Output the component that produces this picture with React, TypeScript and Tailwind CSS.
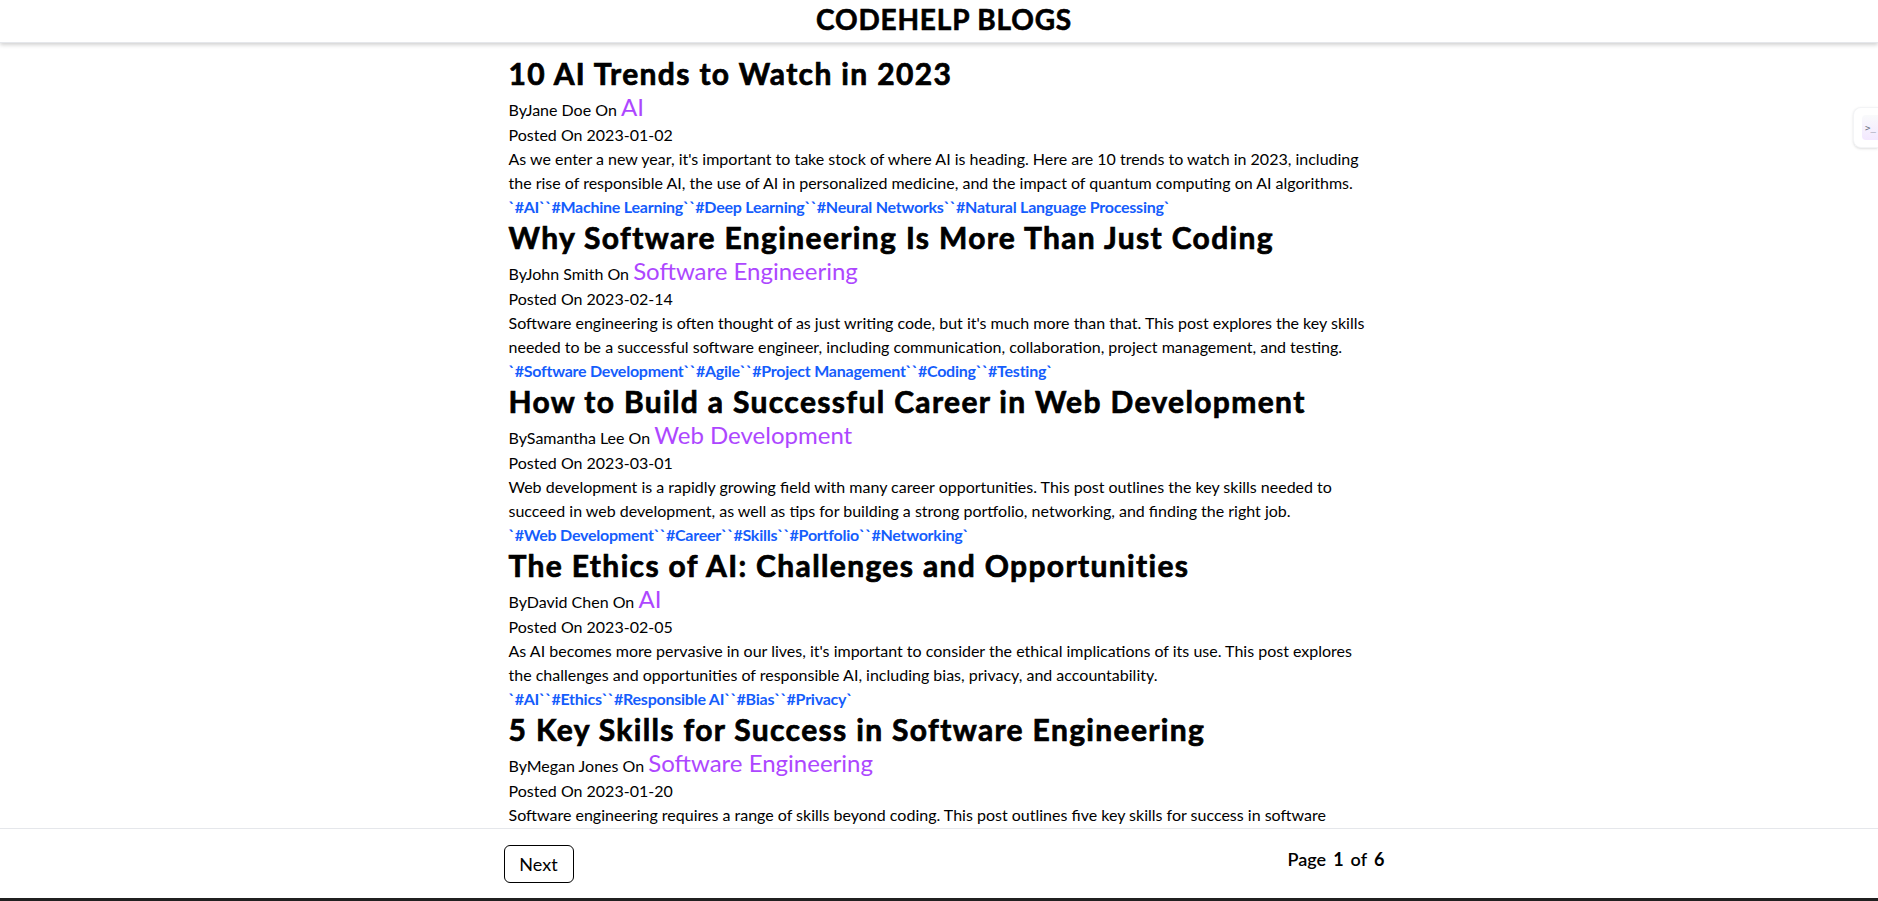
import { useState } from "react";

interface Post {
  title: string;
  author: string;
  category: string;
  date: string;
  lines: string[];
  tags: string[];
}

const posts: Post[] = [
  {
    title: "10 AI Trends to Watch in 2023",
    author: "Jane Doe",
    category: "AI",
    date: "2023-01-02",
    lines: [
      "As we enter a new year, it's important to take stock of where AI is heading. Here are 10 trends to watch in 2023, including",
      "the rise of responsible AI, the use of AI in personalized medicine, and the impact of quantum computing on AI algorithms.",
    ],
    tags: ["AI", "Machine Learning", "Deep Learning", "Neural Networks", "Natural Language Processing"],
  },
  {
    title: "Why Software Engineering Is More Than Just Coding",
    author: "John Smith",
    category: "Software Engineering",
    date: "2023-02-14",
    lines: [
      "Software engineering is often thought of as just writing code, but it's much more than that. This post explores the key skills",
      "needed to be a successful software engineer, including communication, collaboration, project management, and testing.",
    ],
    tags: ["Software Development", "Agile", "Project Management", "Coding", "Testing"],
  },
  {
    title: "How to Build a Successful Career in Web Development",
    author: "Samantha Lee",
    category: "Web Development",
    date: "2023-03-01",
    lines: [
      "Web development is a rapidly growing field with many career opportunities. This post outlines the key skills needed to",
      "succeed in web development, as well as tips for building a strong portfolio, networking, and finding the right job.",
    ],
    tags: ["Web Development", "Career", "Skills", "Portfolio", "Networking"],
  },
  {
    title: "The Ethics of AI: Challenges and Opportunities",
    author: "David Chen",
    category: "AI",
    date: "2023-02-05",
    lines: [
      "As AI becomes more pervasive in our lives, it's important to consider the ethical implications of its use. This post explores",
      "the challenges and opportunities of responsible AI, including bias, privacy, and accountability.",
    ],
    tags: ["AI", "Ethics", "Responsible AI", "Bias", "Privacy"],
  },
  {
    title: "5 Key Skills for Success in Software Engineering",
    author: "Megan Jones",
    category: "Software Engineering",
    date: "2023-01-20",
    lines: [
      "Software engineering requires a range of skills beyond coding. This post outlines five key skills for success in software",
      "engineering, including technical proficiency, problem-solving, communication, teamwork, and continuous learning.",
    ],
    tags: ["Software Engineering", "Skills", "Career", "Problem Solving", "Teamwork"],
  },
];

function BlogCard({ post }: { post: Post }) {
  return (
    <div>
      <p className="text-[30px] leading-[36px] font-bold tracking-[0.045em] [-webkit-text-stroke:0.7px_black]">
        {post.title}
      </p>
      <p className="h-8 leading-8">
        By{post.author} On{" "}
        <span className="text-2xl leading-8 text-purple-500">{post.category}</span>
      </p>
      <p>Posted On {post.date}</p>
      <p>
        {post.lines.map((line, i) => (
          <span key={i} className="block whitespace-nowrap">{line}</span>
        ))}
      </p>
      <div className="flex text-base leading-6 font-bold tracking-[-0.015em] text-blue-600">
        {post.tags.map((tag, i) => (
          <span key={i}>{`\`#${tag}\``}</span>
        ))}
      </div>
    </div>
  );
}

export default function App() {
  const [page, setPage] = useState(1);

  return (
    <div className="h-screen flex flex-col bg-white text-black overflow-hidden font-['Lato',sans-serif] text-base leading-6 relative">
      {/* header */}
      <div className="h-[43px] shrink-0 flex justify-center items-center pl-[10px] pb-[5px] shadow-[0_2px_4px_rgba(0,0,0,0.18)] z-10 border-b border-gray-200">
        <h1 className="text-[28px] font-bold leading-none tracking-[0.03em] [-webkit-text-stroke:0.6px_black]">
          CODEHELP BLOGS
        </h1>
      </div>

      {/* posts */}
      <div className="flex-1 overflow-hidden pl-[10px]">
        <div className="w-[871px] mx-auto pt-3">
          {posts.map((post, idx) => (
            <BlogCard key={idx} post={post} />
          ))}
        </div>
      </div>

      {/* footer */}
      <div className="h-[70px] shrink-0 border-t border-gray-200 pl-[10px] bg-white">
        <div className="w-[881px] mx-auto flex justify-between items-start pt-4">
          <button
            onClick={() => setPage(page + 1)}
            className="w-[70px] h-[38px] border border-black rounded-md text-lg leading-none"
          >
            Next
          </button>
          <p className="flex gap-[7px] text-lg leading-6 font-semibold pt-[2px]">
            <span>Page</span>
            <b className="font-bold">{page}</b>
            <span>of</span>
            <b className="font-bold">6</b>
          </p>
        </div>
      </div>
      <div className="h-[3px] shrink-0 bg-[#202020]" />

      {/* extension widget */}
      <div className="absolute right-0 top-[107px] w-[25px] h-[41px] rounded-l-lg bg-white border border-r-0 border-gray-100 shadow-sm flex items-center justify-end">
        <div className="w-[16px] h-[25px] rounded-l bg-gradient-to-b from-gray-50 to-purple-100 flex items-center pl-[3px] text-[9px] text-gray-500 font-['DejaVu_Sans_Mono',monospace]">
          &gt;_
        </div>
      </div>
    </div>
  );
}
